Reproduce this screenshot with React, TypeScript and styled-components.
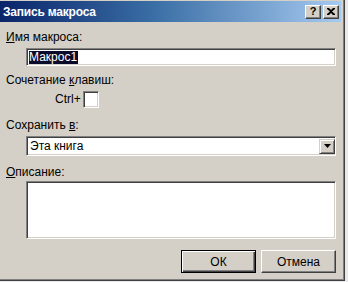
import React from 'react';
import styled, { createGlobalStyle } from 'styled-components';

const GlobalStyle = createGlobalStyle`
  html, body {
    margin: 0;
    padding: 0;
    background: #e4e4e4;
  }
  body {
    font-family: "Liberation Sans", Arial, sans-serif;
  }
`;

const Screen = styled.div`
  width: 348px;
  height: 282px;
  overflow: hidden;
  background: #e8e8ea;
`;

const Window = styled.div`
  width: 345px;
  height: 281px;
  box-sizing: border-box;
  background: #d4d0c8;
  border-right: 1px solid #404040;
  border-bottom: 1px solid #404040;
  box-shadow: inset -1px -1px 0 #808080;
  display: flex;
  flex-direction: column;
`;

const TitleBar = styled.div`
  height: 21px;
  margin: 1px 3px 0 0;
  background: linear-gradient(to right, #0a246a 0%, #3a6ea5 45%, #a6caf0 100%);
  display: flex;
  align-items: center;
  justify-content: space-between;
  padding: 0 2px 0 3px;
`;

const Title = styled.span`
  color: #fff;
  font-weight: bold;
  font-size: 12px;
  letter-spacing: -0.2px;
`;

const TitleButtons = styled.div`
  display: flex;
  gap: 2px;
`;

const TitleButton = styled.div`
  width: 16px;
  height: 14px;
  box-sizing: border-box;
  background: #d4d0c8;
  border-top: 1px solid #fff;
  border-left: 1px solid #fff;
  border-right: 1px solid #404040;
  border-bottom: 1px solid #404040;
  box-shadow: inset -1px -1px 0 #808080;
  display: flex;
  align-items: center;
  justify-content: center;
  font-size: 11px;
  font-weight: bold;
  color: #000;
  line-height: 1;
`;

const Body = styled.div`
  display: flex;
  flex-direction: column;
  padding: 8px 8px 0 6px;
`;

const Label = styled.div<{ $top: number }>`
  font-size: 12px;
  line-height: 14px;
  height: 14px;
  color: #000;
  margin-top: ${({ $top }) => $top}px;
`;

const Key = styled.span`
  text-decoration: underline;
`;

const Sunken = styled.div<{ $h: number; $top: number }>`
  margin-top: ${({ $top }) => $top}px;
  margin-left: 20px;
  width: 310px;
  height: ${({ $h }) => $h}px;
  box-sizing: border-box;
  background: #fff;
  border-top: 1px solid #808080;
  border-left: 1px solid #808080;
  border-right: 1px solid #fff;
  border-bottom: 1px solid #fff;
  box-shadow: inset 1px 1px 0 #404040, inset -1px -1px 0 #d4d0c8;
  display: flex;
  align-items: center;
  padding: 0 2px;
  font-size: 12px;
`;

const Selected = styled.span`
  background: #0a0a2a;
  color: #fff;
  line-height: 13px;
  padding: 0 1px 0 0;
`;

const ShortcutRow = styled.div`
  margin-top: 4px;
  height: 16px;
  display: flex;
  align-items: center;
  padding-left: 49px;
  gap: 2px;
  font-size: 12px;
`;

const KeyBox = styled.div`
  width: 16px;
  height: 17px;
  box-sizing: border-box;
  background: #fff;
  border-top: 1px solid #808080;
  border-left: 1px solid #808080;
  border-right: 1px solid #fff;
  border-bottom: 1px solid #fff;
  box-shadow: inset 1px 1px 0 #404040, inset -1px -1px 0 #d4d0c8;
`;

const ComboText = styled.span`
  flex: 1;
  padding-left: 1px;
`;

const DropButton = styled.div`
  width: 16px;
  height: 15px;
  box-sizing: border-box;
  background: #d4d0c8;
  border-top: 1px solid #d4d0c8;
  border-left: 1px solid #d4d0c8;
  border-right: 1px solid #404040;
  border-bottom: 1px solid #404040;
  box-shadow: inset 1px 1px 0 #fff, inset -1px -1px 0 #808080;
  display: flex;
  align-items: center;
  justify-content: center;
  margin-right: -2px;
`;

const Buttons = styled.div`
  margin-top: 11px;
  display: flex;
  justify-content: flex-end;
  gap: 5px;
  padding-right: 0;
`;

const Button = styled.div<{ $default?: boolean }>`
  width: 75px;
  height: 23px;
  box-sizing: border-box;
  background: #d4d0c8;
  font-size: 12px;
  display: flex;
  align-items: center;
  justify-content: center;
  border: 1px solid ${({ $default }) => ($default ? '#000' : '#d4d0c8')};
  box-shadow: ${({ $default }) =>
    $default
      ? 'inset 1px 1px 0 #fff, inset -1px -1px 0 #404040, inset -2px -2px 0 #808080'
      : 'inset 0 0 0 0 #fff'};
  ${({ $default }) =>
    !$default &&
    `border-top-color: #fff; border-left-color: #fff; border-right-color: #404040; border-bottom-color: #404040; box-shadow: inset -1px -1px 0 #808080;`}
`;

export default function App() {
  return (
    <>
      <GlobalStyle />
      <Screen>
        <Window>
          <TitleBar>
            <Title>Запись макроса</Title>
            <TitleButtons>
              <TitleButton>?</TitleButton>
              <TitleButton>
                <svg width="8" height="7" viewBox="0 0 8 7">
                  <path d="M0 0h2l2 2 2-2h2v1L5 3.5 8 6v1H6L4 5 2 7H0V6l3-2.5L0 1z" fill="#000" />
                </svg>
              </TitleButton>
            </TitleButtons>
          </TitleBar>
          <Body>
            <Label $top={0}>
              <Key>И</Key>мя макроса:
            </Label>
            <Sunken $h={18} $top={4}>
              <Selected>Макрос1</Selected>
            </Sunken>
            <Label $top={7}>
              Сочетание <Key>к</Key>лавиш:
            </Label>
            <ShortcutRow>
              <span>Ctrl+</span>
              <KeyBox />
            </ShortcutRow>
            <Label $top={11}>
              Сохранить <Key>в</Key>:
            </Label>
            <Sunken $h={20} $top={4}>
              <ComboText>Эта книга</ComboText>
              <DropButton>
                <svg width="7" height="4" viewBox="0 0 7 4">
                  <path d="M0 0h7L3.5 4z" fill="#000" />
                </svg>
              </DropButton>
            </Sunken>
            <Label $top={9}>
              <Key>О</Key>писание:
            </Label>
            <Sunken $h={58} $top={2} />
            <Buttons>
              <Button $default>ОК</Button>
              <Button>Отмена</Button>
            </Buttons>
          </Body>
        </Window>
      </Screen>
    </>
  );
}
